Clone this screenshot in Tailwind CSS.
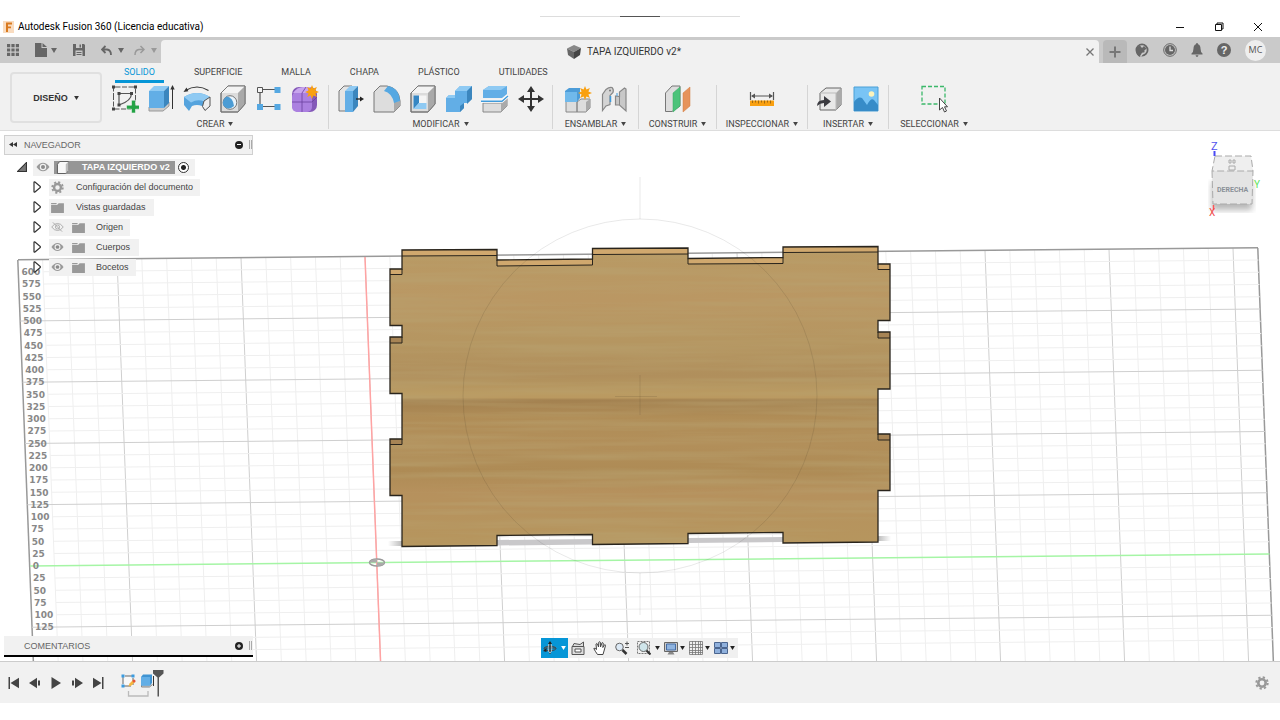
<!DOCTYPE html>
<html lang="es">
<head>
  <meta charset="UTF-8" />
  <meta name="viewport" content="width=device-width, initial-scale=1.0"/>
  <title>Autodesk Fusion 360 (Licencia educativa)</title>
  <script src="https://cdn.jsdelivr.net/npm/@tailwindcss/browser@4"></script>
</head>
<body class="bg-white h-screen flex flex-col overflow-hidden font-['Liberation_Sans',sans-serif] text-[9px] leading-3 text-[#444]">

  <!-- Shared icons -->
  <svg class="hidden">
    <symbol id="caret" viewBox="0 0 6 5"><path d="M0 0h6L3 5z" fill="currentColor"/></symbol>
    <symbol id="twisty" viewBox="0 0 8 12"><path d="M1 1.2V10.8Q1.2 11.4 2 11L7.3 6.4V5.6L2 1Q1.2 .6 1 1.2z" fill="#fff" stroke="#333" stroke-width="1.2"/></symbol>
    <symbol id="folder" viewBox="0 0 14 12"><path d="M0 1h6v1.4H0zM0 3.2h6.5L8.3 1.3H14V12H0z" fill="#999"/></symbol>
    <symbol id="eye" viewBox="0 0 14 10"><path d="M.5 5Q3.500.8 7 .8T13.500 5Q10.500 9.200 7 9.200T.5 5z" fill="#999"/><circle cx="7" cy="5" r="3.200" fill="#f1f1f1"/><circle cx="7" cy="5" r="2" fill="#8a8a8a"/></symbol>
    <symbol id="eye-off" viewBox="0 0 14 10"><path d="M.8 5Q3.500 1.200 7 1.200T13.200 5Q10.500 8.800 7 8.800T.8 5z" fill="none" stroke="#aaa"/><circle cx="7" cy="5" r="2.200" fill="none" stroke="#aaa"/><path d="M2 0l10 10" stroke="#aaa"/></symbol>
    <symbol id="gear" viewBox="0 0 14 14"><circle cx="7" cy="7" r="5.700" fill="none" stroke="#999" stroke-width="2" stroke-dasharray="2.240 2.240"/><circle cx="7" cy="7" r="3.700" fill="none" stroke="#999" stroke-width="2.600"/></symbol>
    <symbol id="cube" viewBox="0 0 28 28"><path d="M2 8L9 1h17v18l-7 8H2z" fill="#dcdcdc" stroke="#777" stroke-linejoin="round"/><path d="M2 8L9 1h17l-7 7z" fill="#f3f3f3"/><path d="M26 1l-7 7v19l7-8z" fill="#a9a9a9"/><path d="M2 8L9 1h17v18l-7 8H2z" fill="none" stroke="#777" stroke-linejoin="round"/></symbol>
    <symbol id="spark" viewBox="0 0 12 12"><path d="M6 0l1.200 3.100L10.200 1.800 8.900 4.800 12 6 8.900 7.200l1.300 3L7.200 8.900 6 12 4.800 8.900l-3 1.300 1.300-3L0 6l3.100-1.200-1.300-3 3 1.300z" fill="#f9a010"/></symbol>
  </svg>

  <div class="h-[18px] flex items-end justify-center">
    <div class="w-[200px] h-0.5 flex justify-center border-t border-[#ddd]"><div class="w-10 h-px -mt-px bg-[#555]"></div></div>
  </div>

  <!-- Window title -->
  <header class="h-[19px] shrink-0 flex items-center pl-[3px] pr-[17px] pb-0.5 text-black">
    <svg class="w-[11px] h-3" viewBox="0 0 11 12"><rect width="11" height="12" fill="#f9dcc0"/><path d="M3 1.500h6v2H5v2h3v1.800H5V11H3z" fill="#d97a20"/></svg>
    <h1 class="ml-1 text-[10px] font-[Roboto,sans-serif]">Autodesk Fusion 360 (Licencia educativa)</h1>
    <div class="ml-auto flex gap-[29px]">
      <button aria-label="Minimizar"><svg class="w-[10px] h-[10px]" viewBox="0 0 10 10"><path d="M1 5.500h8" stroke="#111"/></svg></button>
      <button aria-label="Restaurar"><svg class="w-[10px] h-[10px]" viewBox="0 0 10 10"><path d="M1.500 2.500h6v6h-6zM3 2.500V1h6v6H7.500" fill="none" stroke="#111"/></svg></button>
      <button aria-label="Cerrar"><svg class="w-[10px] h-[10px]" viewBox="0 0 10 10"><path d="M1 1l8 8M9 1L1 9" stroke="#111"/></svg></button>
    </div>
  </header>

  <!-- Quick access and document tab -->
  <div class="h-[26px] shrink-0 flex items-end bg-[#cacaca] text-[#666]">
    <div class="w-[161px] h-full flex items-center pl-[7px]">
      <button aria-label="Datos"><svg class="w-3 h-3" viewBox="0 0 12 12" fill="currentColor"><path d="M0 0h3.200v3.200H0zM4.400 0h3.200v3.200H4.400zM8.800 0H12v3.200H8.800zM0 4.400h3.200v3.200H0zM4.400 4.400h3.200v3.200H4.400zM8.800 4.400H12v3.200H8.800zM0 8.800h3.200V12H0zM4.400 8.800h3.200V12H4.400zM8.800 8.800H12V12H8.800z"/></svg></button>
      <button class="ml-4 flex items-center gap-1" aria-label="Archivo"><svg class="w-3 h-[14px]" viewBox="0 0 12 14" fill="currentColor"><path d="M0 0h6.500v5H12v9H0zM7.500 0L12 4H7.500z"/></svg><svg class="w-[6px] h-[5px]"><use href="#caret"/></svg></button>
      <button class="ml-4" aria-label="Guardar"><svg class="w-3 h-3" viewBox="0 0 12 12"><path d="M0 0h11l1 1v11H0z" fill="currentColor"/><path d="M3 0h6v4H3zM2.500 6.500h7V12h-7z" fill="#cacaca"/><path d="M6.500.5h1.500v3H6.500zM3.500 8h5v1h-5zM3.500 10h5v1h-5z" fill="currentColor"/></svg></button>
      <button class="ml-4 flex items-center gap-1.5" aria-label="Deshacer"><svg class="w-[11px] h-[11px]" viewBox="0 0 11 11"><path d="M4.500 1L1 4.500 4.500 8M1.500 4.500H6q4 .5 4 5.500" fill="none" stroke="currentColor" stroke-width="1.800"/></svg><svg class="w-[6px] h-[5px]"><use href="#caret"/></svg></button>
      <button class="ml-[10px] flex items-center gap-1.5 text-[#999]" aria-label="Rehacer"><svg class="w-[11px] h-[11px]" viewBox="0 0 11 11"><path d="M6.500 1L10 4.500 6.500 8M9.500 4.500H5q-4 .5-4 5.500" fill="none" stroke="currentColor" stroke-width="1.500"/></svg><svg class="w-[6px] h-[5px]"><use href="#caret"/></svg></button>
    </div>
    <div class="flex-1 h-[23px] rounded-t bg-[#f1f1f1] flex items-center justify-center relative text-[#333]">
      <svg class="w-[14px] h-[14px]" viewBox="0 0 14 14"><path d="M0 3.500L7 0l7 3-7 4z" fill="#888"/><path d="M0 3.500L7 7v7L1 10z" fill="#666"/><path d="M14 3L7 7v7l6-4z" fill="#444"/></svg>
      <span class="ml-1.5 mr-3 text-[10px] font-[Roboto,sans-serif]">TAPA IZQUIERDO v2*</span>
      <button class="absolute right-[5px] top-2" aria-label="Cerrar documento"><svg class="w-2 h-2" viewBox="0 0 8 8"><path d="M.5.5l7 7M7.500.5l-7 7" stroke="#777" stroke-width="1.300"/></svg></button>
    </div>
    <div class="w-[181px] h-full flex items-center pl-1">
      <button class="w-6 h-[23px] self-end rounded-t bg-[#b9b9b9] grid place-items-center" aria-label="Nuevo diseño"><svg class="w-3 h-3" viewBox="0 0 12 12"><path d="M6 .5v11M.5 6h11" stroke="#777" stroke-width="2"/></svg></button>
      <div class="ml-2 flex items-center gap-[14px]">
        <button aria-label="Extensiones"><svg class="w-[14px] h-[14px]" viewBox="0 0 14 14"><circle cx="7" cy="7" r="5.600" fill="none" stroke="currentColor" stroke-width="1.800"/><path d="M1 8q0-4 4-5.500L7 5l2-2 2.500 2.500L9 8l1 1-3 1-2 4Q1 12 1 8z" fill="currentColor"/><path d="M5.500 13.500L8 10" stroke="#cacaca" stroke-width="1.300"/></svg></button>
        <button aria-label="Estado de trabajos"><svg class="w-[14px] h-[14px]" viewBox="0 0 14 14"><circle cx="7" cy="7" r="6.300" fill="none" stroke="currentColor"/><circle cx="7" cy="7" r="5" fill="currentColor"/><path d="M7 3.500V7.500h3" fill="none" stroke="#ddd" stroke-width="1.300"/></svg></button>
        <button aria-label="Notificaciones"><svg class="w-3 h-[14px]" viewBox="0 0 12 14" fill="currentColor"><path d="M6 0q1 0 1 1.200Q9.500 2 9.500 5.500 9.500 9 11.500 10.500V11.500H.5V10.500Q2.500 9 2.500 5.500 2.500 2 5 1.200 5 0 6 0zM4.500 12.200h3Q7 14 6 14t-1.500-1.800z"/></svg></button>
        <button class="w-[14px] h-[14px] rounded-full bg-[#666] text-[#eee] text-[11px] leading-[14px] font-bold" aria-label="Ayuda">?</button>
        <button class="w-[21px] h-[21px] rounded-full bg-[#eee] text-[#555] text-[9px] font-['Open_Sans',sans-serif]">MC</button>
      </div>
    </div>
  </div>

  <!-- Ribbon -->
  <div class="h-[68px] shrink-0 flex bg-[#f1f1f1] border-b border-[#ddd] pl-[10px]">
    <button class="w-[92px] h-[51px] mt-[9px] border-2 border-[#e0e0e0] rounded flex items-center justify-center gap-1.5 font-bold text-[#333]">DISEÑO <svg class="w-[5px] h-1"><use href="#caret"/></svg></button>
    <div class="flex flex-col font-[Roboto,sans-serif]">
      <nav class="flex h-5 gap-[21px] ml-[13px]">
        <button class="px-[9px] border-b-3 border-[#0696d7] text-[#0696d7]">SOLIDO</button>
        <button class="px-[9px] border-b-3 border-transparent">SUPERFICIE</button>
        <button class="px-[9px] border-b-3 border-transparent">MALLA</button>
        <button class="px-[9px] border-b-3 border-transparent">CHAPA</button>
        <button class="px-[9px] border-b-3 border-transparent">PLÁSTICO</button>
        <button class="px-[9px] border-b-3 border-transparent">UTILIDADES</button>
      </nav>

      <div class="flex h-11 mt-0.5">
        <section class="w-[227px] border-r border-[#d5d5d5] flex flex-col items-center">
          <div class="flex">
            <button class="w-9 grid place-items-center" aria-label="Crear boceto"><svg class="w-7 h-7" viewBox="0 0 28 28"><path d="M2.500 2h22v22h-22z" fill="none" stroke="#555" stroke-dasharray="7 1.500 5 1.500"/><path d="M8 20V8.500h12.500Q20.500 16 8 20z" fill="none" stroke="#555" stroke-width="1.200"/><path d="M1 .5h3v3H1zM23 .5h3v3h-3zM1 22.500h3v3H1zM6.500 7h3v3h-3zM19 7h3v3h-3zM6.500 18.500h3v3h-3z" fill="#444"/><path d="M15.500 20.200h5v-5h4v5h4v4h-4V28h-4v-3.800h-5z" fill="#23a345" stroke="#f1f1f1" stroke-width=".6"/></svg></button>
            <button class="w-9 grid place-items-center" aria-label="Extruir"><svg class="w-7 h-7" viewBox="0 0 28 28"><path d="M2 22v4h14l6-5v-4z" fill="#ccc" stroke="#999"/><path d="M2 6h15v17H2z" fill="#62aee6"/><path d="M2 6l5-5h15l-5 5z" fill="#8fcaf3"/><path d="M17 6l5-5v17l-5 5z" fill="#3b86be"/><path d="M25.500 24V3" stroke="#333"/><path d="M25.500 0l2.200 4.500h-4.400z" fill="#333"/></svg></button>
            <button class="w-9 grid place-items-center" aria-label="Revolución"><svg class="w-7 h-7" viewBox="0 0 28 28"><path d="M2.500 5.500Q14-1.500 25.500 5.500" fill="none" stroke="#333" stroke-width="1.200"/><path d="M.5 7l3-4.500 1.800 3.800z" fill="#333"/><path d="M1 12Q14 4 27 12v9l-5 4-3-4q-5-2-10 0l-3 5-5-6z" fill="#55a3dd"/><path d="M1 12Q14 4 27 12l-6 4.500q-6-3-13 1z" fill="#8fcaf3"/><path d="M21 16l6-4v9l-5 4.500-2.500-4z" fill="#eee" stroke="#555"/></svg></button>
            <button class="w-9 grid place-items-center" aria-label="Agujero"><svg class="w-7 h-7" viewBox="0 0 28 28"><use href="#cube"/><circle cx="11" cy="17.500" r="6.800" fill="#e8f3fb" stroke="#777"/><path d="M8 11.500q6 1 7 9.500 -4 4-8.500 1.500T5 14q1-2 3-2.500z" fill="#4c9cd4"/></svg></button>
            <button class="w-9 grid place-items-center" aria-label="Patrón"><svg class="w-7 h-7" viewBox="0 0 28 28"><path d="M5 4.500h18M5 4.500v17h18" fill="none" stroke="#555" stroke-width="1.200"/><path d="M2.500 2.500h5v5h-5z" fill="#f5f5f5" stroke="#555"/><path d="M19.500 2h6v6h-6zM2 19h6v6H2zM19.500 19h6v6h-6z" fill="#55a8e2"/></svg></button>
            <button class="w-9 grid place-items-center" aria-label="Crear forma"><svg class="w-7 h-7" viewBox="0 0 28 28"><rect x="1" y="2" width="25" height="25" rx="7" fill="#8459b8"/><rect x="1" y="7" width="20" height="20" rx="5" fill="#ab80e0"/><path d="M2 8q4-6 10-6h8l-4 6z" fill="#c8a5ee"/><path d="M1 17h20l5-5M11 27V8l4-6" fill="none" stroke="#6b3fa0" stroke-width=".8"/><svg x="14" y="0" width="14" height="14"><use href="#spark"/></svg></svg></button>
          </div>
          <button class="mt-[5px] flex items-center gap-1">CREAR <svg class="w-[5px] h-1"><use href="#caret"/></svg></button>
        </section>

        <section class="w-[224px] border-r border-[#d5d5d5] flex flex-col items-center">
          <div class="flex">
            <button class="w-9 grid place-items-center" aria-label="Pulsar/tirar"><svg class="w-7 h-7" viewBox="0 0 28 28"><path d="M2 6l5-5h8v25H2z" fill="#e4e4e4" stroke="#777"/><path d="M8 6h8v21H8z" fill="#62aee6"/><path d="M8 6l5-5h8l-5 5z" fill="#8fcaf3"/><path d="M16 6l5-5v20l-5 6z" fill="#3b86be"/><path d="M19 14h5" stroke="#222" stroke-width="1.300"/><path d="M27 14l-4-2.500v5z" fill="#222"/></svg></button>
            <button class="w-9 grid place-items-center" aria-label="Empalme"><svg class="w-7 h-7" viewBox="0 0 28 28"><path d="M1 7l6-6h7q12 2 13 15v5l-6 6H1z" fill="#ddd" stroke="#777"/><path d="M21 17l6-1v5l-6 6z" fill="#aaa"/><path d="M11 6l4-5q11 2 12 15l-6 2Q19 8 11 6z" fill="#55a8e2"/></svg></button>
            <button class="w-9 grid place-items-center" aria-label="Vaciado"><svg class="w-7 h-7" viewBox="0 0 28 28"><use href="#cube"/><path d="M4.500 10.500h13V24h-13z" fill="#f5f5f5"/><path d="M4.500 10.500H10V18l-5.500 6z" fill="#3586c3"/><path d="M10 18h7.500v6h-13z" fill="#8fcaf3"/></svg></button>
            <button class="w-9 grid place-items-center" aria-label="Combinar"><svg class="w-7 h-7" viewBox="0 0 28 28"><path d="M1 13l3-3h6V6l5-5h12v13l-5 4h-3v5l-4 4H1z" fill="#62aee6"/><path d="M10 6l5-5h12l-5 5zM1 13l3-3h6v3z" fill="#8fcaf3"/><path d="M22 6l5-5v13l-5 5zM15 21l4-3v5l-4 4z" fill="#3b86be"/></svg></button>
            <button class="w-9 grid place-items-center" aria-label="Dividir"><svg class="w-7 h-7" viewBox="0 0 28 28"><path d="M2 18h18l6-5v8l-6 6H2z" fill="#ddd" stroke="#888"/><path d="M20 18l6-5v8l-6 6z" fill="#aaa"/><path d="M2 5l6-4h18v8l-5 4H2z" fill="#62aee6"/><path d="M2 5l6-4h18l-6 4z" fill="#8fcaf3"/><path d="M0 16.200h21l6-5.200" fill="none" stroke="#fff" stroke-width="3"/><path d="M0 16.200h21l6-5.200" fill="none" stroke="#409bdb" stroke-width="1.400"/></svg></button>
            <button class="w-9 grid place-items-center" aria-label="Desplazar"><svg class="w-7 h-7" viewBox="0 0 28 28"><path d="M14 4v20M4 14h20" stroke="#333" stroke-width="2"/><path d="M14 1l4 6h-8zM14 27l4-6h-8zM1 14l6-4v8zM27 14l-6-4v8z" fill="#333"/></svg></button>
          </div>
          <button class="mt-[5px] flex items-center gap-1">MODIFICAR <svg class="w-[5px] h-1"><use href="#caret"/></svg></button>
        </section>

        <section class="w-[86px] border-r border-[#d5d5d5] flex flex-col items-center">
          <div class="flex">
            <button class="w-9 grid place-items-center" aria-label="Nuevo componente"><svg class="w-7 h-7" viewBox="0 0 28 28"><path d="M2 16h11v11H2zM13 17l4-3h9v9l-4 4h-9z" fill="#ddd" stroke="#888"/><path d="M22 17l4-3v9l-4 4z" fill="#aaa"/><path d="M1 6l4-3h11v10l-3 4H1z" fill="#4c9cd8"/><path d="M1 7h12v10H1z" fill="#70b9eb"/><svg x="14" y="1" width="14" height="14"><use href="#spark"/></svg></svg></button>
            <button class="w-9 grid place-items-center" aria-label="Unión"><svg class="w-7 h-7" viewBox="0 0 28 28"><path d="M2.500 25.500V9.500L6 4.500q3-2.500 6-2 2 2 1 5l-3 3v9l-4 1.500z" fill="#d4d4d4" stroke="#888" stroke-width="1.200"/><path d="M15.500 11l4 .5V7l5-4 1.500 1v22l-6.500-6h-4z" fill="#c8c8c8" stroke="#888" stroke-width="1.200"/><path d="M19.500 11v9" stroke="#888"/><path d="M10.500 11v6" stroke="#409bdb" stroke-width="1.500"/><path d="M17 8v3" stroke="#409bdb"/><circle cx="10" cy="5.500" r="1" fill="#777"/></svg></button>
          </div>
          <button class="mt-[5px] flex items-center gap-1">ENSAMBLAR <svg class="w-[5px] h-1"><use href="#caret"/></svg></button>
        </section>

        <section class="w-[78px] border-r border-[#d5d5d5] flex flex-col items-center">
          <button class="w-9 grid place-items-center" aria-label="Plano de desfase"><svg class="w-7 h-7" viewBox="0 0 28 28"><path d="M1.500 8L8 1h8v20l-8 5.500H1.500z" fill="#ddd" stroke="#777"/><path d="M9 8l7-6v19l-7 6z" fill="#4cc37a" stroke="#37a862" stroke-width=".5"/><path d="M19 8l7-6v19l-7 6z" fill="#e6935b" stroke="#d27c43" stroke-width=".5"/></svg></button>
          <button class="mt-[5px] flex items-center gap-1">CONSTRUIR <svg class="w-[5px] h-1"><use href="#caret"/></svg></button>
        </section>

        <section class="w-[91px] border-r border-[#d5d5d5] flex flex-col items-center">
          <button class="w-9 grid place-items-center" aria-label="Medir"><svg class="w-7 h-7" viewBox="0 0 28 28"><path d="M2.500 7v8M25.500 7v8M4 11h20" stroke="#555" stroke-width="1.200"/><path d="M3 11l4-2.500v5zM25 11l-4-2.500v5z" fill="#555"/><path d="M2 15.500h24v5.500H2z" fill="#f9a010"/><path d="M4.500 15.500v2.500M7.500 15.500v2M10.500 15.500v3M13.500 15.500v2M16.500 15.500v3M19.500 15.500v2M22.500 15.500v3" stroke="#8a5a10" stroke-width=".8"/></svg></button>
          <button class="mt-[5px] flex items-center gap-1">INSPECCIONAR <svg class="w-[5px] h-1"><use href="#caret"/></svg></button>
        </section>

        <section class="w-[81px] border-r border-[#d5d5d5] flex flex-col items-center">
          <div class="flex">
            <button class="w-9 grid place-items-center" aria-label="Insertar derivado"><svg class="w-7 h-7" viewBox="0 0 28 28"><path d="M4 8l6-5h15v17l-5 5H4z" fill="#e8e8e8" stroke="#666" stroke-linejoin="round"/><path d="M20 8l5-5v17l-5 5z" fill="#aaa"/><path d="M4 8h16v17" fill="none" stroke="#bbb"/><path d="M1 21q0-6 7-6v-4l7 5.500L8 22v-4q-4 0-7 3z" fill="#3a3a40"/></svg></button>
            <button class="w-9 grid place-items-center" aria-label="Insertar imagen"><svg class="w-7 h-7" viewBox="0 0 28 28"><path d="M2 2h24v24H2z" fill="#79c4f5" stroke="#4a9fd6"/><path d="M2 17q4-6 8-4l5 7q4-8 7-5l4 5v6H2z" fill="#378cc8"/><circle cx="19.500" cy="9" r="2.800" fill="#fdf3bb"/></svg></button>
          </div>
          <button class="mt-[5px] flex items-center gap-1">INSERTAR <svg class="w-[5px] h-1"><use href="#caret"/></svg></button>
        </section>

        <section class="w-[90px] flex flex-col items-center">
          <button class="w-9 grid place-items-center" aria-label="Seleccionar"><svg class="w-7 h-7" viewBox="0 0 28 28"><path d="M2 1.500h23v17.500H2z" fill="none" stroke="#3bb86a" stroke-width="1.300" stroke-dasharray="4 2"/><path d="M19.500 13v12l3-2.500 2 4.500 2-1-2-4.200h3z" fill="#fff" stroke="#444"/></svg></button>
          <button class="mt-[5px] flex items-center gap-1 whitespace-nowrap">SELECCIONAR <svg class="w-[5px] h-1"><use href="#caret"/></svg></button>
        </section>
      </div>
    </div>
  </div>

  <!-- Canvas -->
  <main class="flex-1 min-h-0 relative overflow-hidden">
    <svg class="absolute inset-0 w-full h-full" viewBox="0 131 1280 530" preserveAspectRatio="xMidYMid slice">
      <defs>
        <linearGradient id="wood" x1="0" y1="0" x2="0" y2="1">
          <stop offset="0" stop-color="#b89a64"/><stop offset=".18" stop-color="#ba9763"/>
          <stop offset=".32" stop-color="#b59661"/><stop offset=".43" stop-color="#b08f5c"/>
          <stop offset=".49" stop-color="#ba9b62"/><stop offset=".504" stop-color="#ba9960"/>
          <stop offset=".512" stop-color="#a38150"/><stop offset=".57" stop-color="#b08d57"/>
          <stop offset=".66" stop-color="#b28f5a"/><stop offset=".75" stop-color="#ae8b55"/>
          <stop offset=".82" stop-color="#b6915d"/><stop offset="1" stop-color="#b6965e"/>
        </linearGradient>
        <filter id="grain" x="0" y="0" width="1" height="1">
          <feTurbulence type="fractalNoise" baseFrequency=".004 .14" numOctaves="3" seed="4"/>
          <feColorMatrix values="0 0 0 0 .48  0 0 0 0 .36  0 0 0 0 .16  1.300 0 0 0 -.5"/>
        </filter>
        <linearGradient id="shadeL"><stop offset="0" stop-color="#bbb" stop-opacity="0"/><stop offset="1" stop-color="#bbb"/></linearGradient>
        <linearGradient id="shadeR"><stop offset="0" stop-color="#bbb"/><stop offset="1" stop-color="#bbb" stop-opacity="0"/></linearGradient>
        <path id="board" d="M402 250L497 249.500V260L592.500 259V248.500L688 248V258.500L783 257.500V247L878 246.500V264H890V320.500H878V332H890V389H878V434H890V490.500H878V542L783 543V532.500L688 533.500V543.500L592.500 544.500V534.500L497 535.500V545.500L402 546.500V495.500H390V439H402V393.500H390V337H402V325.500H390V269H402z"/>
        <clipPath id="boardClip"><use href="#board"/></clipPath>
      </defs>

      <g id="grid"></g>
      <g id="scale" class="font-['DejaVu_Sans',sans-serif] text-[9px] font-bold" fill="#888"></g>

      <ellipse cx="377" cy="562.500" rx="7.500" ry="3.500" fill="none" stroke="#999" stroke-width="1.500"/>
      <path d="M377 562.500v-3.500q-7 0-7.500 3.500zM377 562.500v3.500q7 0 7.500-3.500z" fill="#aaa"/>

      <path d="M388 541h14v5h-14z" fill="url(#shadeL)"/>
      <path d="M878 536h13v5h-13z" fill="url(#shadeR)"/>
      <path d="M497 540L592.500 539V544.500L497 545.500zM688 538L783 537V542L688 543z" fill="#c9c8ca"/>

      <use href="#board" fill="url(#wood)"/>
      <g clip-path="url(#boardClip)">
        <rect x="389" y="246" width="502" height="301" filter="url(#grain)"/>
        <path d="M402 250L497 249.500V255.500L402 256zM497 260L592.500 259V265L497 266zM592.500 248.500L688 248V254L592.500 254.500zM688 258.500L783 257.500V263.500L688 264zM783 247L878 246.500V252L783 252.500zM390 269h12v5.500h-12zM878 264h12v5.500h-12z" fill="#d0a86e"/>
        <path d="M390 337h12v6h-12zM878 332h12v6h-12zM390 439h12v5.500h-12zM878 434h12v6h-12z" fill="#a78455"/>
      </g>
      <g fill="none" stroke="#29241c">
        <use href="#board" stroke-width="1.300"/>
        <path d="M402 256L497 255.500M497 266L592.500 265M592.500 254.500L688 254M688 264L783 263.500M783 252.500L878 252M390 274.500h12M390 343h12M390 444.500h12M878 269.500h12M878 338h12M878 440h12M497 260v6M592.500 259v6M688 258.500v5.500M783 257.500v6M402 269v5.500M402 337v6M402 439v5.500M878 264v5.500M878 332v6M878 434v6"/>
      </g>

      <g fill="none" stroke="#000" stroke-opacity=".09">
        <circle cx="640" cy="396" r="177"/>
        <path d="M640 177v42M640 375v40M640 573v42M615 396.500h42"/>
      </g>
    </svg>

    <!-- View cube -->
    <svg class="absolute right-4 top-1.5 w-[72px] h-[88px] font-[Roboto,sans-serif]" viewBox="0 0 72 88">
      <defs><filter id="soft"><feGaussianBlur stdDeviation="3"/></filter></defs>
      <path d="M20 45h40v28H20z" fill="#888" opacity=".6" filter="url(#soft)"/>
      <path d="M23 19h36l2 15H20z" fill="#efefef"/>
      <path d="M20 34h41l-1 33H21z" fill="#e4e4e4"/>
      <path d="M23 19h36l2 15H20zM20 34l1 33h39l1-33" fill="none" stroke="#aaa" stroke-dasharray="7 3"/>
      <path d="M37 23h2v3h-2zM41 23h2v3h-2zM37 29h6v4h-6z" fill="none" stroke="#aaa"/>
      <text x="25" y="55" class="text-[7px] font-bold" fill="#8a9097">DERECHA</text>
      <path d="M22.500 14v5" stroke="#4a4af5" stroke-width="2"/><path d="M21.500 68v5" stroke="#f55" stroke-width="1.500"/>
      <text x="19" y="13" class="text-[11px]" fill="#5252ee">Z</text>
      <text x="62" y="51" class="text-[10px]" fill="#5be35b">Y</text>
      <text x="17" y="79" class="text-[10px]" fill="#f04a4a">X</text>
    </svg>

    <!-- Browser -->
    <aside class="absolute left-1 top-1 w-[249px]">
      <div class="h-5 flex items-center pl-1 pb-px bg-[#f1f1f1] border border-[#d0d0d0] text-[#666]">
        <svg class="w-2 h-[5px]" viewBox="0 0 8 5"><path d="M4 0v5L0 2.500zM8 0v5L4 2.500z" fill="#333"/></svg>
        <h2 class="ml-[7px]">NAVEGADOR</h2>
        <button class="ml-auto w-2 h-2 rounded-full bg-[#222] grid place-items-center" aria-label="Contraer"><span class="w-1 h-px bg-white"></span></button>
        <span class="ml-1.5 w-[3px] h-[9px] border-x border-[#aaa]"></span>
      </div>
      <ul class="mt-0.5">
        <li class="h-5 flex items-center pl-[13px]">
          <svg class="w-[10px] h-[10px] mr-1.5" viewBox="0 0 9 9"><path d="M8.500.5v8h-8z" fill="#777" stroke="#333"/></svg>
          <div class="h-[17px] flex items-center bg-[#f1f1f1] pl-[3px] pr-1.5">
            <svg class="w-[14px] h-[10px]"><use href="#eye"/></svg>
            <div class="ml-1 h-[13px] w-[121px] flex items-center gap-3 bg-[#969696] text-white font-bold pl-0.5 whitespace-nowrap">
              <svg class="w-[14px] h-[13px]" viewBox="0 0 28 28"><path d="M2 7L7 1h19v19l-6 7H2z" fill="#f7f7f7" stroke="#555" stroke-width="2"/><path d="M20 7l6-6v19l-6 7z" fill="#bbb"/></svg>
              TAPA IZQUIERDO v2
            </div>
            <label class="ml-[3px] flex"><input type="radio" checked aria-label="Activar componente" class="appearance-none w-[11px] h-[11px] rounded-full border border-[#333] bg-[radial-gradient(circle,#222_2px,#fff_3px)]" /></label>
          </div>
        </li>
        <li class="h-5 flex items-center pl-[29px]">
          <svg class="w-2 h-3 mr-2"><use href="#twisty"/></svg>
          <div class="h-[17px] flex items-center bg-[#f1f1f1] px-0.5 pr-[7px]"><svg class="w-[13px] h-[13px] mr-3"><use href="#gear"/></svg>Configuración del documento</div>
        </li>
        <li class="h-5 flex items-center pl-[29px]">
          <svg class="w-2 h-3 mr-2"><use href="#twisty"/></svg>
          <div class="h-[17px] flex items-center bg-[#f1f1f1] px-0.5 pr-[9px]"><svg class="w-[13px] h-[11px] mr-3"><use href="#folder"/></svg>Vistas guardadas</div>
        </li>
        <li class="h-5 flex items-center pl-[29px]">
          <svg class="w-2 h-3 mr-2"><use href="#twisty"/></svg>
          <div class="h-[17px] flex items-center bg-[#f1f1f1] px-0.5 pr-[7px]"><svg class="w-[13px] h-[10px] mr-2"><use href="#eye-off"/></svg><svg class="w-[13px] h-[11px] mr-[11px]"><use href="#folder"/></svg>Origen</div>
        </li>
        <li class="h-5 flex items-center pl-[29px]">
          <svg class="w-2 h-3 mr-2"><use href="#twisty"/></svg>
          <div class="h-[17px] flex items-center bg-[#f1f1f1] px-0.5 pr-[9px]"><svg class="w-[13px] h-[10px] mr-2"><use href="#eye"/></svg><svg class="w-[13px] h-[11px] mr-[11px]"><use href="#folder"/></svg>Cuerpos</div>
        </li>
        <li class="h-5 flex items-center pl-[29px]">
          <svg class="w-2 h-3 mr-2"><use href="#twisty"/></svg>
          <div class="h-[17px] flex items-center bg-[#f1f1f1] px-0.5 pr-[7px]"><svg class="w-[13px] h-[10px] mr-2"><use href="#eye"/></svg><svg class="w-[13px] h-[11px] mr-[11px]"><use href="#folder"/></svg>Bocetos</div>
        </li>
      </ul>
    </aside>

    <!-- Comments -->
    <div class="absolute left-1 bottom-1 w-[249px] h-[21px] flex items-center pl-5 bg-[#f1f1f1] border-b-2 border-black text-[#666]">
      <h2>COMENTARIOS</h2>
      <button class="ml-auto" aria-label="Expandir"><svg class="w-2 h-2" viewBox="0 0 8 8"><circle cx="4" cy="4" r="4" fill="#222"/><path d="M4 2v4M2 4h4" stroke="#fff"/></svg></button>
      <span class="ml-1.5 mr-px w-[3px] h-[9px] border-x border-[#aaa]"></span>
    </div>

    <!-- Navigation bar -->
    <div class="absolute left-1/2 -translate-x-[99px] bottom-[3px] h-5 w-[197px] flex items-center bg-[#f0f0f0] text-[#222]">
      <button class="w-[27px] h-5 flex items-center justify-center gap-1 bg-[#0696d7]" aria-label="Órbita"><svg class="w-[14px] h-[14px]" viewBox="0 0 14 14"><path d="M7 1v12M1 7h12" stroke="#444" stroke-width="1.200"/><ellipse cx="7" cy="7.500" rx="6" ry="2.200" fill="none" stroke="#444"/><ellipse cx="7" cy="7" rx="1.800" ry="5" fill="none" stroke="#ccc" stroke-width=".8"/><path d="M0 10l3.500-3v4zM7 0l2 3H5z" fill="#222"/></svg><svg class="w-[5px] h-1 text-white"><use href="#caret"/></svg></button>
      <button class="ml-[3px]" aria-label="Mirar a"><svg class="w-[14px] h-[14px]" viewBox="0 0 14 14"><path d="M1 5.500h12v8H1zM1.500 5.500L3 2.500l6 1 3.500-2.500v4.500" fill="#ddd" stroke="#555"/><path d="M4 8h6v3H4z" fill="#fff" stroke="#555"/></svg></button>
      <button class="ml-2" aria-label="Encuadre"><svg class="w-[14px] h-[14px]" viewBox="0 0 14 14"><path d="M4.500 13.500Q2 10 .8 7.500 1.800 6.500 3.500 8.500L3 3q1-1 1.500 0L5.500 6 5.800 1.200q1-1 1.500 0L7.500 6 9 1.800q1-.5 1.300.5L9.800 6.500l1.700-2.700q1-.3 1 .7L11 10l-1 3.500z" fill="#fff" stroke="#444"/></svg></button>
      <button class="ml-2" aria-label="Zoom"><svg class="w-[14px] h-[14px]" viewBox="0 0 14 14"><circle cx="4.500" cy="6" r="3.800" fill="#dce9f5" stroke="#666"/><path d="M7.500 9l4 4" stroke="#333" stroke-width="2.500"/><path d="M10 2.500h4M12 .5v4M10 6.500h4" stroke="#555"/></svg></button>
      <button class="ml-2 flex items-center gap-1" aria-label="Zoom ventana"><svg class="w-[14px] h-[14px]" viewBox="0 0 14 14"><path d="M.5.5h12v12H.5z" fill="none" stroke="#777" stroke-dasharray="2 1"/><circle cx="6.500" cy="6" r="4.500" fill="#cfe5ea" stroke="#666"/><path d="M9.500 9.500l4 4" stroke="#333" stroke-width="2.200"/></svg><svg class="w-[5px] h-1"><use href="#caret"/></svg></button>
      <button class="ml-1 flex items-center gap-0.5" aria-label="Visualización"><svg class="w-[14px] h-[14px]" viewBox="0 0 14 14"><path d="M.5 1.500h13v9H.5z" fill="#ccc" stroke="#666"/><path d="M2.500 3h9v6h-9z" fill="#8fb4e0" stroke="#446ca5"/><path d="M5 11h4l1.500 2.500h-7z" fill="#888"/></svg><svg class="w-[5px] h-1"><use href="#caret"/></svg></button>
      <button class="ml-1 flex items-center gap-0.5" aria-label="Rejilla"><svg class="w-[14px] h-[14px]" viewBox="0 0 14 14"><path d="M.5.5h13v13H.5zM3.500 0v14M6.500 0v14M9.500 0v14M0 3.500h14M0 6.500h14M0 9.500h14M11.500 0v14M0 11.500h14" fill="none" stroke="#777" stroke-width=".8"/></svg><svg class="w-[5px] h-1"><use href="#caret"/></svg></button>
      <button class="ml-1 flex items-center gap-0.5" aria-label="Ventanas"><svg class="w-[14px] h-[12px]" viewBox="0 0 14 12"><path d="M.5.5h6v5h-6zM7.500.5h6v5h-6zM.5 6.500h6v5h-6zM7.500 6.500h6v5h-6z" fill="#8fb0dc" stroke="#4a658f"/></svg><svg class="w-[5px] h-1"><use href="#caret"/></svg></button>
    </div>
  </main>

  <!-- Timeline -->
  <footer class="h-[42px] shrink-0 flex items-center bg-[#f1f1f1] border-t border-[#ccc] pl-2 pr-[11px] mb-[17px] text-[#444]">
    <div class="flex gap-[9px]">
      <button aria-label="Inicio"><svg class="w-3 h-3" viewBox="0 0 12 12"><path d="M.5 0h1.500v12H.5zM11 .8v10.400L2.500 6z" fill="currentColor"/></svg></button>
      <button aria-label="Atrás"><svg class="w-3 h-3" viewBox="0 0 12 12"><path d="M8 .8v10.400L0 6zM9 3.500h2v5H9z" fill="currentColor"/></svg></button>
      <button aria-label="Reproducir"><svg class="w-3 h-3" viewBox="0 0 12 12"><path d="M1.500 0v12L11 6z" fill="currentColor"/></svg></button>
      <button aria-label="Adelante"><svg class="w-3 h-3" viewBox="0 0 12 12"><path d="M4 .8v10.400L12 6zM1 3.500h2v5H1z" fill="currentColor"/></svg></button>
      <button aria-label="Fin"><svg class="w-3 h-3" viewBox="0 0 12 12"><path d="M10 0h1.500v12H10zM1 .8v10.400L9.500 6z" fill="currentColor"/></svg></button>
    </div>
    <svg class="ml-4 w-11 h-7" viewBox="0 0 44 28">
      <path d="M3 7h10v10H3z" fill="#f8f8f8" stroke="#666" stroke-dasharray="7 3" stroke-dashoffset="-2"/>
      <path d="M1.500 5.500h3v3h-3zM11.500 5.500h3v3h-3zM1.500 15.500h3v3h-3z" fill="#3a9be0"/>
      <path d="M8.500 17.500l1-3 4-4 2 2-4 4z" fill="#f5b740"/><circle cx="14" cy="12" r="1.500" fill="#e5533b"/>
      <path d="M21.500 14v4h8l3-2.500" fill="#ccc" stroke="#888"/>
      <path d="M21 8l2-2.500h9V14l-2 2.500h-9z" fill="#3f93d2"/><path d="M21 8h9v8.500h-9z" fill="#62aee6"/>
      <path d="M33.500 17V7" stroke="#333"/>
      <path d="M8.500 22v5h19.500v-5" fill="none" stroke="#bbb" stroke-width="1.300"/>
      <path d="M33 1h10.500v3.500L39 8.500v19h-1.500v-19L33 4.500z" fill="#555"/>
    </svg>
    <button class="ml-auto" aria-label="Configuración"><svg class="w-[14px] h-[14px]"><use href="#gear"/></svg></button>
  </footer>

  <script>
    const SVG = "http://www.w3.org/2000/svg";
    const grid = document.getElementById("grid");
    const scale = document.getElementById("scale");

    function line(x1, y1, x2, y2, color, width) {
      const el = document.createElementNS(SVG, "line");
      Object.entries({ x1, y1, x2, y2, stroke: color, "stroke-width": width || 1 })
        .forEach(([key, value]) => el.setAttribute(key, value));
      grid.appendChild(el);
    }

    // Left edge of the work plane, which leans with the camera
    const leftEdge = (y) => 18 + (y - 260) * 0.038;

    // Columns: one every 25 mm, darker every 125 mm
    for (let i = -14; i <= 36; i++) {
      const x = 365 + i * 24.8;
      const top = 256.6 - i * 0.24;
      const edge = i === -14 || i === 36;
      const color = edge ? "#999" : i % 5 === 0 ? "#cfcfcf" : "#efefef";
      line(x, top, x + 15.7, 665, color, edge ? 1.5 : 1);
    }

    // Rows and their labels
    for (let mm = 625; mm >= -175; mm -= 25) {
      const y = 566 - mm * 0.49;
      const edge = mm === 625;
      const major = mm % 125 === 0;
      const x = leftEdge(y);
      const start = major ? 0 : 25;
      if (mm !== 0) {
        line(x + start, y - start * 0.01, x + 1240, y - 12, edge ? "#999" : major ? "#cfcfcf" : "#efefef", edge ? 1.5 : 1);
      }

      if (mm < 625 && mm > -150) {
        const text = document.createElementNS(SVG, "text");
        text.setAttribute("x", x + 3);
        text.setAttribute("y", y + 3);
        text.textContent = Math.abs(mm);
        scale.appendChild(text);
      }
    }

    // Axes
    line(30, 566, 1269.5, 554, "#a5f5a5", 1.5);
    line(365, 257, 380.7, 665, "#ffa3a3", 1.5);
  </script>
</body>
</html>
